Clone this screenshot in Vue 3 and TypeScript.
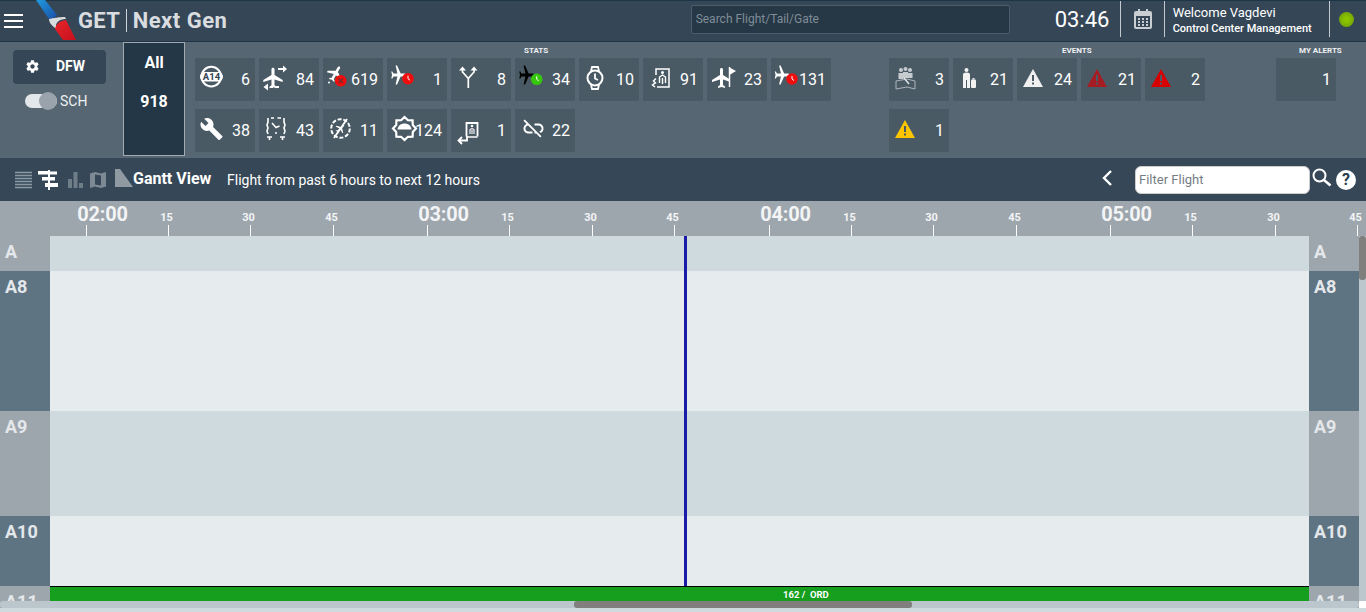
<script setup lang="ts">
interface Tile {
  icon: string;
  count: number;
}

const PLANE =
  'M21 16v-2l-8-5V3.5c0-.83-.67-1.5-1.5-1.5S10 2.67 10 3.5V9l-8 5v2l8-2.5V19l-2 1.5V22l3.5-1 3.5 1v-1.5L13 19v-5.5l8 2.5z';

function plane(x: number, y: number, rot: number, size: number, fill = '#fff', len = size) {
  return `<path fill="${fill}" transform="translate(${x} ${y}) rotate(${rot}) scale(${size} ${len}) translate(-11.5 -12)" d="${PLANE}"/>`;
}

function clockBadge(x: number, y: number, fill: string) {
  return `<circle cx="${x}" cy="${y}" r="5.8" fill="${fill}"/><path d="M${x} ${y - 3}v3l2 1.5" fill="none" stroke="#fff" stroke-width="1"/>`;
}

function warning(fill: string) {
  return `<path fill="${fill}" d="M4 24 14 6l10 18z"/><path fill="#4a5a65" d="M13 12h2v6h-2zM13 19.500h2v2h-2z"/>`;
}

function star() {
  const pts: string[] = [];
  for (let i = 0; i < 16; i++) {
    const r = i % 2 ? 9 : 11.500;
    const a = (i * Math.PI) / 8;
    pts.push(`${(15.5 + r * Math.cos(a)).toFixed(1)},${(14.5 + r * Math.sin(a)).toFixed(1)}`);
  }
  return pts.join(' ');
}

const icons: Record<string, string> = {
  gate: `<circle cx="14.300" cy="13.600" r="9.800" fill="none" stroke="#fff" stroke-width="2"/><rect x="3" y="9" width="23" height="9.500" rx="4.700" fill="#fff"/><text x="14.500" y="17" text-anchor="middle" font-family="Roboto" font-weight="700" font-size="9.500" fill="#334452">A14</text>`,
  swap: `${plane(12, 15, 0, 1.02)}<path d="M17 6h7M4 24h3M10 24h2M15 24h3" stroke="#fff" stroke-width="2" fill="none"/><path fill="#fff" d="M22 2.500 26 6l-4 3.500zM7 20.500 2.500 24 7 27.500z"/>`,
  cancel: `${plane(10.5, 10.5, 30, 0.85, '#fff', 0.8)}<circle cx="4" cy="19.500" r="1" fill="#fff"/><circle cx="15.700" cy="17.700" r="5.800" fill="#f00d0d"/><path d="m13.500 15.500 4.400 4.400m0-4.400-4.400 4.400" stroke="#7c2a2a" stroke-width="1.500"/>`,
  delay: `${plane(9.5, 12, 90, 1, '#fff', 0.72)}${clockBadge(19, 15.7, '#f00d0d')}`,
  fork: `<path d="M15.300 25V15.500L9.500 9V5M15.300 15.500 21 9V5" fill="none" stroke="#fff" stroke-width="1.700"/><path fill="#fff" d="M6 7.500 9.500 3.500l3.500 4zM17.500 7.500 21 3.500l3.500 4z"/>`,
  ontime: `${plane(9.5, 12, 90, 1, '#000', 0.72)}${clockBadge(19.7, 16.3, '#35c80d')}`,
  watch: `<circle cx="14" cy="15" r="7.500" fill="none" stroke="#fff" stroke-width="2"/><path d="M14 10.500V15.500l3 1.500M10 8.500 11 4h6l1 4.500M10 21.500 11 26h6l1-4.500" fill="none" stroke="#fff" stroke-width="1.800"/>`,
  door: `<path d="M11 12V6h13v18H12" fill="none" stroke="#fff" stroke-width="1.500"/><circle cx="17.500" cy="9.500" r="1.500" fill="#fff"/><path d="M14.500 20v-6l3-2 3 2v6M17.500 15v6" stroke="#fff" stroke-width="1.400" fill="none"/><path d="M11 15.500 8.500 18l2.500 2.500M10 24l-2.500-2 2.500-2" stroke="#fff" stroke-width="1.500" fill="none"/>`,
  flag: `<svg x="0" y="0" width="20" height="32" viewBox="0 0 20 32">${plane(12.5, 15, 0, 1)}</svg><path d="M20.500 4v20" stroke="#fff" stroke-width="1.500"/><path fill="#fff" d="M20.500 4.500 27 8l-6.500 4z"/>`,
  delay2: `${plane(9, 12, 90, 1, '#fff', 0.72)}${clockBadge(19, 16, '#f00d0d')}`,
  wrench: `<path fill="#fff" transform="translate(2.500 3)" d="M22.700 19l-9.100-9.100c.9-2.300.4-5-1.500-6.900-2-2-5-2.400-7.400-1.300L9 6 6 9 1.600 4.700C.4 7.100.9 10.100 2.900 12.100c1.900 1.900 4.600 2.400 6.900 1.500l9.100 9.100c.4.400 1 .4 1.400 0l2.300-2.300c.5-.4.500-1.100.1-1.400z"/>`,
  turn: `<path d="M7 4v4l-1 3 1 3-1 3 1 3M23 4v4l1 3-1 3 1 3-1 3M6 23h5M8.500 23v3M19 23h5M21.500 23v3M10 4h3M16.500 4h3.500" fill="none" stroke="#fff" stroke-width="1.600"/><path d="M11 9l4 4.500 3.500-1.500M15 18v2" fill="none" stroke="#fff" stroke-width="1.500"/>`,
  nofly: `<circle cx="15.500" cy="14.500" r="9.300" fill="none" stroke="#fff" stroke-width="2" stroke-dasharray="4 1.800"/>${plane(15.5, 14.5, 45, 0.5)}<path d="m22 5-13 19" stroke="#fff" stroke-width="1.800"/>`,
  star: `<polygon points="${star()}" fill="none" stroke="#fff" stroke-width="2.200"/><path fill="#fff" d="M8.500 15.500c.5-4 3.500-6 7-6s6.500 2 7 6z"/>`,
  exit: `<path d="M13.500 22V8.500h11V22" fill="none" stroke="#fff" stroke-width="1.800" transform="translate(0 .5)"/><path d="M14 23h10.500" stroke="#fff" stroke-width="1.500"/><circle cx="19" cy="12" r="1.300" fill="#fff"/><path d="M17 20v-4.500l2-1 2 1V20M19 16v4" stroke="#fff" stroke-width="1.100" fill="none"/><path d="M14 22v4.500H5.500M9 23l-3.500 3.500L9 30" fill="none" stroke="#fff" stroke-width="1.800"/>`,
  unlink: `<g transform="translate(4.500 2.500) scale(1)"><path fill="#fff" d="M17 7h-4v1.900h4c1.710 0 3.100 1.390 3.100 3.100 0 1.430-.98 2.630-2.310 2.980l1.460 1.460C20.880 15.610 22 13.950 22 12c0-2.760-2.240-5-5-5zM2 4.270l3.110 3.110C3.290 8.120 2 9.910 2 12c0 2.760 2.240 5 5 5h4v-1.900H7c-1.710 0-3.100-1.390-3.100-3.100 0-1.590 1.210-2.900 2.760-3.070L13 15.270V17h1.730l4.010 4L20 19.740 3.270 3 2 4.270z"/></g>`,
  crowd: `<g fill="#c6cbcf"><circle cx="10" cy="7" r="2"/><circle cx="14.500" cy="6" r="2"/><circle cx="19" cy="7" r="2"/><path d="M7.500 10h5v6h-5zM12 9h5v6h-5zM16.500 10h5v5h-5z"/></g><path d="M5 18 16 16l8 2v8l-8-2-11 2z" fill="none" stroke="#aeb5ba" stroke-width="1"/><path d="m13 15 5 6" stroke="#dfe2e4" stroke-width="1.500"/>`,
  bag: `<g fill="#f2f2f2"><circle cx="11.500" cy="7" r="2"/><path d="M8 11.500a3.500 2 0 0 1 7 0V25h-3v-8h-1v8H8z"/><rect x="16" y="16.500" width="5" height="8.500" rx="1"/><path d="M17.500 15h2v1.500h-2z"/></g>`,
  warnWhite: warning('#f0f0f0'),
  warnDark: warning('#a51c22'),
  warnRed: warning('#d70000'),
  warnYellow: warning('#fbc600'),
  none: '',
};

const stats: Tile[] = [
  { icon: 'gate', count: 6 },
  { icon: 'swap', count: 84 },
  { icon: 'cancel', count: 619 },
  { icon: 'delay', count: 1 },
  { icon: 'fork', count: 8 },
  { icon: 'ontime', count: 34 },
  { icon: 'watch', count: 10 },
  { icon: 'door', count: 91 },
  { icon: 'flag', count: 23 },
  { icon: 'delay2', count: 131 },
  { icon: 'wrench', count: 38 },
  { icon: 'turn', count: 43 },
  { icon: 'nofly', count: 11 },
  { icon: 'star', count: 124 },
  { icon: 'exit', count: 1 },
  { icon: 'unlink', count: 22 },
];

const events: Tile[] = [
  { icon: 'crowd', count: 3 },
  { icon: 'bag', count: 21 },
  { icon: 'warnWhite', count: 24 },
  { icon: 'warnDark', count: 21 },
  { icon: 'warnRed', count: 2 },
  { icon: 'warnYellow', count: 1 },
];

const alerts: Tile[] = [{ icon: 'none', count: 1 }];

const ticks = [
  { x: 86, label: '02:00', big: true },
  { x: 168, label: '15' },
  { x: 250, label: '30' },
  { x: 333, label: '45' },
  { x: 427, label: '03:00', big: true },
  { x: 509, label: '15' },
  { x: 592, label: '30' },
  { x: 674, label: '45' },
  { x: 769, label: '04:00', big: true },
  { x: 851, label: '15' },
  { x: 933, label: '30' },
  { x: 1016, label: '45' },
  { x: 1110, label: '05:00', big: true },
  { x: 1192, label: '15' },
  { x: 1275, label: '30' },
  { x: 1357, label: '45' },
];

const rows = [
  { name: 'A', height: 35, grey: true },
  { name: 'A8', height: 140, grey: false },
  { name: 'A9', height: 105, grey: true },
  { name: 'A10', height: 70, grey: false },
  { name: 'A11', height: 22, grey: true },
];
</script>

<template>
  <div class="page">
    <header class="topbar">
      <div class="burger"><i /><i /><i /></div>
      <svg class="logo" width="42" height="40" viewBox="0 0 42 40">
        <defs>
          <linearGradient id="aa-blue" x1="0" y1="0" x2="1" y2="1">
            <stop offset="0" stop-color="#1f9ade" />
            <stop offset="1" stop-color="#1b4fa8" />
          </linearGradient>
          <linearGradient id="aa-red" x1="0" y1="0" x2="1" y2="1">
            <stop offset="0" stop-color="#e8262b" />
            <stop offset="1" stop-color="#c6101c" />
          </linearGradient>
        </defs>
        <path fill="url(#aa-blue)" d="M0 0h9l12 15-3 3-5 1z" />
        <path fill="#d9dcde" d="M13 19c4-1 11-2 16-2l1 2c-5 0-9 2-10 6l1 4c-4-2-8-6-8-10z" />
        <path fill="url(#aa-red)" d="M19 29c1-5 4-8 11-9l10 20H27z" />
      </svg>
      <span class="brand">GET</span>
      <span class="brand-line" />
      <span class="brand next">Next Gen</span>
      <div class="top-right">
        <input class="search" placeholder="Search Flight/Tail/Gate" />
        <span class="clock">03:46</span>
        <span class="sep" />
        <svg class="cal" width="18" height="20" viewBox="0 0 18 20">
          <path fill="#c9ced2" d="M2 2h2V0h2v2h6V0h2v2h2a2 2 0 0 1 2 2v14a2 2 0 0 1-2 2H2a2 2 0 0 1-2-2V4a2 2 0 0 1 2-2zm0 5v11h14V7z" />
          <path fill="#c9ced2" d="M4 9h2v2H4zm4 0h2v2H8zm4 0h2v2h-2zm-8 3h2v2H4zm4 0h2v2H8zm4 0h2v2h-2zm-8 3h2v2H4zm4 0h2v2H8zm4 0h2v2h-2z" />
        </svg>
        <span class="sep" />
        <div class="welcome">
          <div class="who">Welcome Vagdevi</div>
          <div class="dept">Control Center Management</div>
        </div>
        <span class="sep" />
        <span class="led" />
      </div>
    </header>

    <section class="panel">
      <div class="site">
        <button class="site-btn">
          <svg width="15" height="15" viewBox="0 0 24 24">
            <path fill="#fff" d="M19.430 12.980c.04-.32.07-.64.07-.98s-.03-.66-.07-.98l2.110-1.650c.19-.15.240-.42.120-.64l-2-3.460c-.12-.22-.39-.3-.61-.22l-2.490 1c-.52-.4-1.080-.73-1.690-.98l-.38-2.650C14.460 2.180 14.250 2 14 2h-4c-.25 0-.46.180-.49.420l-.38 2.650c-.61.25-1.170.59-1.690.98l-2.490-1c-.23-.09-.49 0-.61.220l-2 3.460c-.13.220-.07.490.12.640l2.110 1.650c-.04.32-.07.650-.07.980s.03.660.07.980l-2.110 1.650c-.19.150-.24.420-.12.640l2 3.460c.12.220.39.300.61.220l2.490-1c.52.400 1.080.730 1.690.980l.38 2.650c.03.240.24.420.49.420h4c.25 0 .46-.18.49-.42l.38-2.650c.61-.25 1.170-.59 1.690-.98l2.490 1c.23.090.49 0 .61-.22l2-3.460c.12-.22.07-.49-.12-.64l-2.110-1.650zM12 15.500c-1.930 0-3.500-1.570-3.500-3.500s1.570-3.500 3.500-3.500 3.500 1.570 3.500 3.500-1.570 3.500-3.500 3.500z" />
          </svg>
          <span>DFW</span>
        </button>
        <div class="toggle-row">
          <span class="toggle"><i /></span>
          <span class="sch">SCH</span>
        </div>
      </div>

      <div class="all">
        <span>All</span>
        <span>918</span>
      </div>

      <div class="group group-stats">
        <div class="group-title">STATS</div>
        <div class="tiles">
          <div v-for="t in stats" :key="t.icon" class="tile">
            <svg width="32" height="32" viewBox="0 0 32 32" v-html="icons[t.icon]" />
            <span>{{ t.count }}</span>
          </div>
        </div>
      </div>

      <div class="group group-events">
        <div class="group-title">EVENTS</div>
        <div class="tiles">
          <div v-for="t in events" :key="t.icon" class="tile">
            <svg width="32" height="32" viewBox="0 0 32 32" v-html="icons[t.icon]" />
            <span>{{ t.count }}</span>
          </div>
        </div>
      </div>

      <div class="group group-alerts">
        <div class="group-title">MY ALERTS</div>
        <div class="tiles">
          <div v-for="t in alerts" :key="t.icon" class="tile">
            <svg width="32" height="32" viewBox="0 0 32 32" v-html="icons[t.icon]" />
            <span>{{ t.count }}</span>
          </div>
        </div>
      </div>
    </section>

    <nav class="toolbar">
      <svg width="18" height="18" viewBox="0 0 18 18" class="tb-list">
        <path d="M0 1.500h17M0 4.500h17M0 7.500h17M0 10.500h17M0 13.500h17M0 16.500h17" stroke="#8c99a3" stroke-width="1.500" />
      </svg>
      <svg width="20" height="20" viewBox="0 0 20 20" class="tb-gantt">
        <path fill="#fff" d="M10 0h2v20h-2zM0 1h10v3.500H0zM12 1.500h7v3h-7zM4 7h6v3.500H4zM12 7h5v3.500h-5zM7 13h3v4H7zM12 13h8v4h-8z" />
      </svg>
      <svg width="15" height="16" viewBox="0 0 15 16" class="tb-bars">
        <path fill="#6f7d88" d="M0 7h4v9H0zM5.500 0h4v16h-4zM11 11h4v5h-4z" />
      </svg>
      <svg width="16" height="16" viewBox="0 0 16 16" class="tb-map">
        <path fill="#7d8a94" d="M0 1.500 5 0l6 1.500L16 0v14.500L11 16l-6-1.500L0 16zM5 2.500v10l6 1v-10z" />
      </svg>
      <svg width="18" height="18" viewBox="0 0 18 18" class="tb-tri">
        <path fill="#8f9aa3" d="M0 0h5l13 18H0z" />
      </svg>
      <span class="view-name">Gantt View</span>
      <span class="view-range">Flight from past 6 hours to next 12 hours</span>
      <svg width="12" height="18" viewBox="0 0 12 18" class="chev">
        <path d="M10 2 3 9l7 7" fill="none" stroke="#fff" stroke-width="2.400" />
      </svg>
      <input class="filter" placeholder="Filter Flight" />
      <svg width="20" height="20" viewBox="0 0 20 20" class="find">
        <circle cx="7.500" cy="7.500" r="6" fill="none" stroke="#fff" stroke-width="2" />
        <path d="m12 12 6.500 5.500" stroke="#fff" stroke-width="2.600" />
      </svg>
      <span class="help">?</span>
    </nav>

    <div class="gantt">
      <div class="ruler">
        <div
          v-for="t in ticks"
          :key="t.x"
          class="tick"
          :class="{ big: t.big }"
          :style="{ left: t.x + 'px' }"
        >
          <span>{{ t.label }}</span>
        </div>
      </div>

      <div class="rows">
        <div
          v-for="r in rows"
          :key="r.name"
          class="row"
          :class="{ grey: r.grey }"
          :style="{ height: r.height + 'px' }"
        >
          <div class="gate">{{ r.name }}</div>
          <div class="lane" />
          <div class="gate">{{ r.name }}</div>
        </div>
        <div class="now" />
        <div class="flight">162 /&nbsp; ORD</div>
      </div>

      <div class="vscroll"><i /></div>
      <div class="hscroll"><i /></div>
      <div class="corner" />
    </div>
  </div>
</template>

<style>
  html,
  body {
    margin: 0;
    overflow: hidden;
  }
</style>

<style scoped>
  .page {
    width: 1366px;
    height: 612px;
    overflow: hidden;
    font-family: Roboto, "Liberation Sans", sans-serif;
    color: #fff;
  }

  .topbar {
    height: 42px;
    box-sizing: border-box;
    background: #354757;
    border-top: 1px solid #1e3548;
    border-bottom: 1px solid #1e3548;
    display: flex;
    align-items: center;
  }

  .burger {
    width: 19px;
    margin-left: 4px;
    margin-right: 13px;
    display: flex;
    flex-direction: column;
    gap: 4px;
  }

  .burger i {
    height: 2px;
    background: #fff;
  }

  .logo {
    margin-top: -2px;
    flex: none;
  }

  .brand {
    font-size: 22px;
    font-weight: 700;
    color: #dadde0;
    letter-spacing: 0.3px;
    padding-bottom: 2px;
  }

  .brand-line {
    width: 1px;
    height: 23px;
    background: #cfd4d8;
    margin: 0 5.500px 2px 6px;
  }

  .next {
    width: 558px;
    letter-spacing: 0.5px;
  }

  .top-right {
    display: flex;
    align-items: center;
    height: 100%;
    padding-bottom: 4px;
    box-sizing: border-box;
  }

  .search {
    width: 319px;
    height: 29px;
    box-sizing: border-box;
    background: #263746;
    border: 1px solid #4d5d6a;
    border-radius: 2px;
    padding: 0 4px;
    font: 12px Roboto, sans-serif;
    color: #fff;
    outline: none;
  }

  .search::placeholder {
    color: #7f8d98;
  }

  .clock {
    font-size: 22px;
    margin-left: 45px;
    width: 65px;
    color: #fff;
  }

  .sep {
    width: 1px;
    height: 36px;
    background: #c4cace;
  }

  .cal {
    margin: 0 12px 0 13px;
    flex: none;
  }

  .welcome {
    margin: 2px 0 0 8px;
    width: 156px;
  }

  .who {
    font-size: 13px;
    line-height: 17px;
  }

  .dept {
    font-size: 11px;
    font-weight: 500;
    line-height: 15px;
    white-space: nowrap;
  }

  .led {
    width: 15px;
    height: 15px;
    border-radius: 50%;
    margin-left: 9px;
    background: radial-gradient(circle, #8cc400 20%, #6c9a08 90%);
  }

  .panel {
    height: 116px;
    background: #566773;
    display: flex;
    padding-left: 13px;
  }

  .site {
    width: 93px;
    margin-right: 17px;
    padding-top: 8px;
  }

  .site-btn {
    width: 93px;
    height: 34px;
    box-sizing: border-box;
    background: #354757;
    border: none;
    border-radius: 4px;
    color: #fff;
    font: 700 14px Roboto, sans-serif;
    display: flex;
    align-items: center;
    padding: 0 0 2px 12px;
    gap: 16px;
  }

  .toggle-row {
    display: flex;
    align-items: center;
    margin: 8px 0 0 12px;
    height: 18px;
  }

  .toggle {
    width: 32px;
    height: 14px;
    border-radius: 7px;
    background: #e3e7e9;
    position: relative;
    margin-right: 3px;
  }

  .toggle i {
    position: absolute;
    right: 0;
    top: -2px;
    width: 18px;
    height: 18px;
    border-radius: 50%;
    background: #9aa3ab;
  }

  .sch {
    font-size: 14px;
    color: #eef0f2;
  }

  .all {
    width: 62px;
    height: 114px;
    box-sizing: border-box;
    background: #233746;
    border: 1px solid #a4abb0;
    margin-right: 10px;
    display: flex;
    flex-direction: column;
    align-items: center;
    padding-top: 10px;
    gap: 19px;
    font-size: 16px;
    font-weight: 700;
    line-height: 20px;
  }

  .group-title {
    height: 16px;
    font-size: 8px;
    font-weight: 700;
    line-height: 18px;
    color: #eef0f2;
    white-space: nowrap;
  }

  .tiles {
    display: grid;
    grid-template-columns: repeat(auto-fill, 60px);
    grid-auto-rows: 43px;
    gap: 8px 4px;
  }

  .group-stats {
    width: 636px;
    margin-right: 58px;
  }

  .group-stats .group-title {
    padding-left: 329px;
  }

  .group-events {
    width: 316px;
    margin-right: 71px;
  }

  .group-events .group-title {
    padding-left: 173px;
  }

  .group-alerts {
    width: 70px;
  }

  .group-alerts .group-title {
    padding-left: 23px;
  }

  .tile {
    background: #4a5a65;
    position: relative;
    display: flex;
    justify-content: flex-end;
    align-items: center;
    padding-right: 5px;
    font-size: 16px;
    padding-bottom: 1px;
    height: 43px;
    box-sizing: border-box;
  }

  .tile svg {
    position: absolute;
    left: 2px;
    top: 5px;
  }

  .toolbar {
    height: 43px;
    background: #364858;
    display: flex;
    align-items: center;
    padding-left: 15px;
  }

  .toolbar svg {
    flex: none;
  }

  .tb-gantt {
    margin-left: 5px;
  }

  .tb-bars {
    margin-left: 10px;
  }

  .tb-map {
    margin-left: 7px;
  }

  .tb-tri {
    margin-left: 9px;
    margin-top: -4px;
  }

  .view-name {
    font-size: 16px;
    font-weight: 700;
    margin-top: -3px;
    width: 94px;
    white-space: nowrap;
  }

  .view-range {
    font-size: 14px;
    width: 874px;
    white-space: nowrap;
  }

  .chev {
    margin-top: -3px;
  }

  .filter {
    width: 175px;
    height: 28px;
    box-sizing: border-box;
    margin-left: 22px;
    border: 1px solid #ccc;
    border-radius: 6px;
    padding: 0 3px;
    font: 13px Roboto, sans-serif;
    background: #fff;
    outline: none;
  }

  .filter::placeholder {
    color: #757d85;
  }

  .find {
    margin: -3px 0 0 2px;
  }

  .help {
    width: 20px;
    height: 20px;
    margin-left: 4px;
    border-radius: 50%;
    background: #fff;
    color: #2b3c4a;
    font-size: 16px;
    font-weight: 700;
    line-height: 20px;
    text-align: center;
  }

  .gantt {
    position: relative;
    height: 411px;
    background: #cfdadf;
  }

  .ruler {
    height: 35px;
    background: #9ea6ad;
    position: relative;
  }

  .tick {
    position: absolute;
    top: 24px;
    width: 1px;
    height: 11px;
    background: #fff;
  }

  .tick span {
    position: absolute;
    bottom: 12px;
    left: -1.500px;
    transform: translateX(-50%);
    font-size: 11px;
    font-weight: 700;
    line-height: 12px;
    color: #f2f4f5;
  }

  .tick.big span {
    left: 16.500px;
    bottom: 11px;
    font-size: 20px;
    line-height: 22px;
    letter-spacing: -0.2px;
    white-space: nowrap;
  }

  .rows {
    position: relative;
    height: 372px;
    overflow: hidden;
  }

  .row {
    display: grid;
    grid-template-columns: 50px 1259px 50px;
    overflow: hidden;
  }

  .gate {
    background: #5f7483;
    color: #e4e8eb;
    font-size: 18px;
    font-weight: 700;
    line-height: 21px;
    padding: 5px 0 0 5px;
  }

  .lane {
    background: #e6ebee;
  }

  .row.grey .gate {
    background: #9ea6ad;
  }

  .row.grey .lane {
    background: #cfdadf;
  }

  .now {
    position: absolute;
    left: 684px;
    top: 0;
    width: 3px;
    height: 350px;
    background: #1a1ca8;
  }

  .flight {
    position: absolute;
    left: 50px;
    top: 350px;
    width: 1259px;
    height: 16px;
    box-sizing: border-box;
    border-top: 1px solid #000;
    background: #169e1f;
    padding-left: 733px;
    font-size: 9.500px;
    font-weight: 700;
    line-height: 15px;
    white-space: nowrap;
  }

  .vscroll {
    position: absolute;
    left: 1359px;
    top: 35px;
    width: 7px;
    height: 365px;
    background: #bcc7cd;
  }

  .vscroll i {
    display: block;
    height: 44px;
    border-radius: 3px;
    background: #807f7d;
  }

  .hscroll {
    position: absolute;
    left: 0;
    top: 400px;
    width: 1359px;
    height: 7px;
    background: #bcc7cd;
    border-radius: 3px;
  }

  .hscroll i {
    position: absolute;
    left: 574px;
    width: 338px;
    height: 7px;
    border-radius: 3px;
    background: #807f7d;
  }

  .corner {
    position: absolute;
    left: 1359px;
    top: 400px;
    width: 7px;
    height: 7px;
    background: #fff;
  }
</style>
